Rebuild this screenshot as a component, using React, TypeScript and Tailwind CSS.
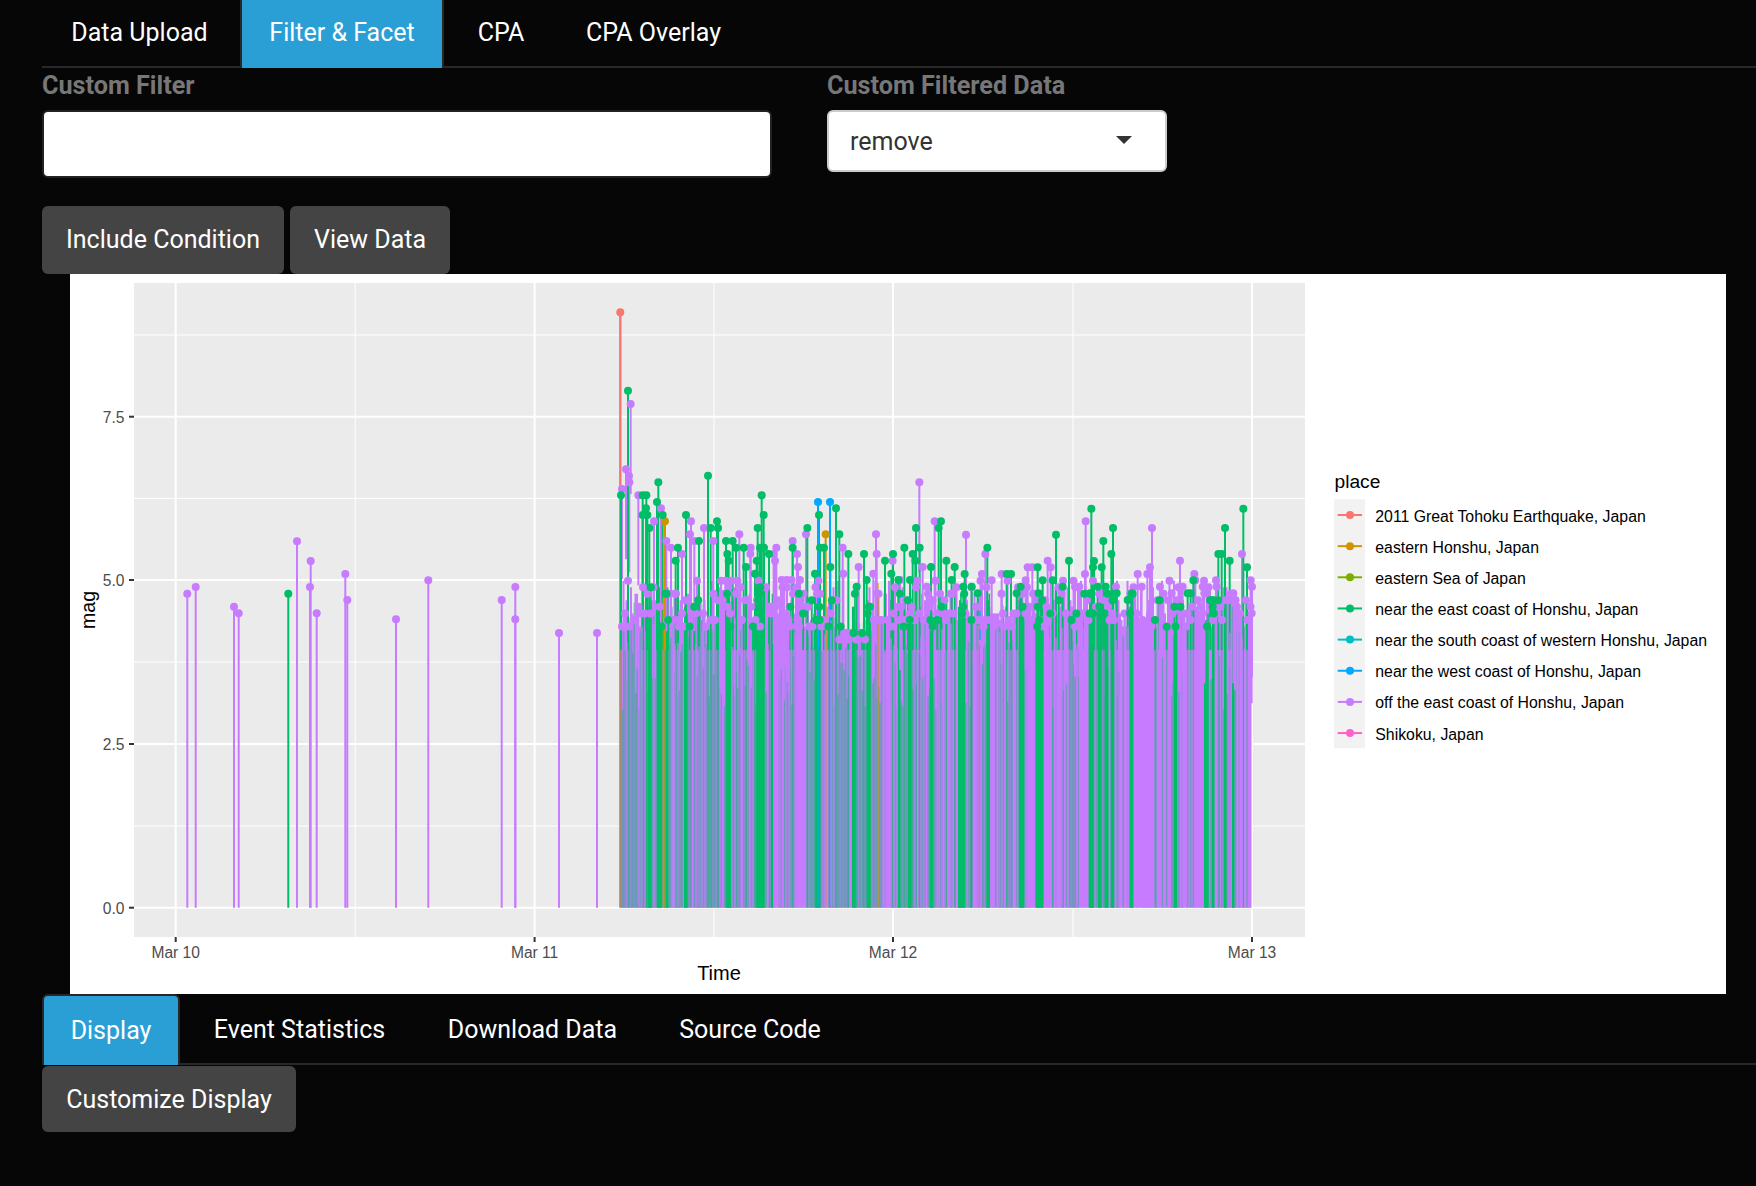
import React, { useMemo } from "react";

const C: Record<string, string> = {
  r: "#F8766D", o: "#CD9600", l: "#7CAE00", g: "#00BE67", c: "#00BFC4", b: "#00A9FF", p: "#C77CFF", k: "#FF61CC",
};
const BASE = 907.7;
const SPLIT = 650;

function rng(seed: number) {
  return () => {
    seed |= 0;
    seed = (seed + 0x6d2b79f5) | 0;
    let t = Math.imul(seed ^ (seed >>> 15), 1 | seed);
    t = (t + Math.imul(t ^ (t >>> 7), 61 | t)) ^ t;
    return ((t ^ (t >>> 14)) >>> 0) / 4294967296;
  };
}

type P = [number, number, string];
const LEFT: P[] = [
  [187.3, 593.7, "p"], [195.7, 587, "p"], [234, 606.7, "p"], [238.7, 613.3, "p"], [288.3, 593.7, "g"], [297, 541.3, "p"],
  [310.7, 561, "p"], [310, 587, "p"], [316.7, 613.3, "p"], [345.3, 574, "p"], [347.3, 600, "p"], [396, 619.3, "p"],
  [428.3, 580.3, "p"], [501.7, 600, "p"], [515.3, 587, "p"], [515.3, 619.3, "p"], [559, 633, "p"], [597, 633, "p"],
];
const Z5: P[] = ([
  [212,342,"p"],[198,538,"p"],[207,558,"p"],[208,577,"p"],[186,597,"p"],[235,616,"p"],[303,655,"p"],[282,694,"p"],[319,753,"p"],[333,773,"p"],[366,792,"p"],
  [393,694,"p"],[390,733,"p"],[403,753,"p"],[432,714,"p"],[460,753,"p"],[538,733,"p"],[572,773,"p"],[571,792,"p"],[649,773,"p"],[645,812,"p"],[641,792,"p"],
  [738,733,"p"],[698,753,"p"],[711,792,"p"],[714,831,"p"],[848,773,"p"],[896,831,"p"],[948,733,"p"],[950,792,"p"],[998,812,"p"],[1078,577,"p"],[1124,694,"p"],
  [1088,831,"p"],[940,851,"p"],[665,870,"p"],[680,870,"p"],[695,870,"p"],[720,870,"p"],[1100,890,"p"],[850,851,"p"],[1020,870,"p"],
  [315,694,"o"],[797,733,"o"],
  [204,302,"g"],[183,616,"g"],[248,616,"g"],[259,616,"g"],[295,577,"g"],[291,636,"g"],[258,655,"g"],[248,675,"g"],[262,675,"g"],[308,675,"g"],[268,714,"g"],
  [354,773,"g"],[347,812,"g"],[378,675,"g"],[417,753,"g"],[444,557,"g"],[452,714,"g"],[471,694,"g"],[474,714,"g"],[498,753,"g"],[518,753,"g"],[528,773,"g"],
  [551,773,"g"],[605,616,"g"],[611,675,"g"],[593,714,"g"],[600,773,"g"],[612,773,"g"],[627,792,"g"],[777,675,"g"],[828,655,"g"],[742,714,"g"],[838,733,"g"],
  [698,773,"g"],[780,773,"g"],[792,773,"g"],[865,792,"g"],[811,831,"g"],[912,792,"g"],[975,812,"g"],[999,792,"g"],[994,851,"g"],[1033,773,"g"],[1068,714,"g"],
  [1079,773,"g"],[1058,792,"g"],[1066,812,"g"],[1136,714,"g"],[1143,694,"g"],[1113,831,"g"],[1159,812,"g"],[1184,831,"g"],[1175,870,"g"],[765,851,"g"],[890,890,"g"],
  [502,792,"g"],[506,812,"g"],[590,812,"g"],[585,851,"g"],[558,831,"g"],[1050,870,"g"],[1015,870,"g"],[920,870,"g"],
  [774,636,"b"],[810,636,"b"],
] as P[]).map(([x, y, c]) => [560 + x / 3, 290 + y / 3, c] as P);
const Z8: P[] = ([
  [18,254,"p"],[76,312,"p"],[66,372,"p"],[263,332,"p"],[272,352,"p"],[203,352,"p"],[217,352,"p"],[377,214,"p"],[375,372,"p"],[576,234,"p"],[570,352,"p"],[562,372,"p"],
  [533,372,"p"],[545,410,"p"],[600,410,"p"],[635,430,"p"],[660,332,"p"],[668,410,"p"],[703,372,"p"],[706,391,"p"],[728,410,"p"],[846,312,"p"],[872,391,"p"],[876,410,"p"],
  [875,490,"p"],[768,391,"p"],[770,410,"p"],[125,372,"p"],[197,391,"p"],[95,391,"p"],[345,410,"p"],[358,410,"p"],[820,430,"p"],[825,450,"p"],[733,430,"p"],[468,410,"p"],
  [82,293,"g"],[14,372,"g"],[288,254,"g"],[233,352,"g"],[327,332,"g"],[394,176,"g"],[402,333,"g"],[399,352,"g"],[430,273,"g"],[459,234,"g"],[454,312,"g"],[425,352,"g"],
  [700,391,"g"],[850,176,"g"],[795,234,"g"],[775,312,"g"],[785,312,"g"],[809,332,"g"],[861,352,"g"],[758,450,"g"],[140,372,"g"],[153,372,"g"],[182,410,"g"],[248,391,"g"],
  [278,391,"g"],[308,410,"g"],[35,410,"g"],[10,410,"g"],[413,410,"g"],[437,410,"g"],[470,430,"g"],[503,450,"g"],[515,430,"g"],[236,430,"g"],[390,430,"g"],[683,430,"g"],
  [692,430,"g"],[53,430,"g"],[170,430,"g"],[418,470,"g"],[432,490,"g"],[510,490,"g"],[620,530,"g"],[585,510,"g"],[233,470,"g"],
] as P[]).map(([x, y, c]) => [960 + x / 3, 450 + y / 3, c] as P);

const GREEN_1: [number, number][] = [[100,110],[128,142],[150,158],[208,218],[335,347],[425,447],[468,473],[602,615],[712,720],[757,766],[850,855],[880,890],[945,953]];
const GREEN_2: [number, number][] = [[70,90],[108,112],[155,165],[252,268],[302,324],[462,475],[490,500],[510,518],[528,538],[585,595],[717,725],[808,820],[832,838],[868,874],[892,897]];
const PURE: [number, number][] = [
  [615 + 473 / 3, 615 + 490 / 3], [615 + 540 / 3, 615 + 570 / 3], [615 + 620 / 3, 615 + 640 / 3], [615 + 800 / 3, 615 + 830 / 3],
  [935 + 275 / 3, 935 + 300 / 3], [935 + 325 / 3, 935 + 345 / 3], [935 + 430 / 3, 935 + 460 / 3], [935 + 612 / 3, 935 + 660 / 3], [935 + 740 / 3, 935 + 800 / 3],
];

const isStripe = (x: number) =>
  GREEN_1.some(([a, b]) => x >= 615 + a / 3 - 1 && x <= 615 + b / 3 + 1) || GREEN_2.some(([a, b]) => x >= 935 + a / 3 - 1 && x <= 935 + b / 3 + 1);

type E = { x: number; y: number; c: string; w: number; dot: boolean; end: number; op: number };

function useChart() {
  return useMemo(() => {
    const r = rng(20110311);
    const magY = (m: number) => BASE - Math.round(m * 10) / 10 * 65.4;
    const under: E[] = [];
    const over: E[] = [];
    const inGap = (x: number) => x > 838 && x < 866;
    for (let x = 622; x <= 1251.5; x += 1.5) {
      const m = inGap(x) ? 4.05 + r() * 0.2 : 4.3 + Math.pow(r(), 1.3) * 0.75;
      under.push({ x, y: magY(m), c: "p", w: 2, dot: r() < 0.6, end: BASE, op: 1 });
    }
    for (let x = 622; x <= 1250; x += 1.5) {
      if (PURE.some(([a, b]) => x >= a && x <= b)) continue;
      const density = x < 935 ? 0.85 : x < 1010 ? 0.6 : 0.4;
      if (r() > density) continue;
      under.push({ x: x + r() * 0.5, y: 600 + r() * 110, c: "g", w: 1.6, dot: false, end: BASE, op: 0.42 });
    }
    for (let x = 626; x <= 1248; x += 4.2) {
      if (r() > 0.24) continue;
      const m = inGap(x) ? 4.15 + r() * 0.25 : 4.3 + Math.pow(r(), 1.3) * 0.6;
      under.push({ x: x + r(), y: magY(m), c: "g", w: 1.8, dot: true, end: SPLIT, op: 1 });
    }
    const add = (o: number, [a, b]: [number, number]) => {
      for (let x = o + a / 3 + 0.4; x <= o + b / 3; x += 1.1) {
        under.push({ x, y: magY(4.3 + r() * 0.6), c: "g", w: 1.6, dot: r() < 0.3, end: BASE, op: 1 });
      }
    };
    GREEN_1.forEach((s) => add(615, s));
    GREEN_2.forEach((s) => add(935, s));
    for (let x = 624; x <= 1251; x += 3) {
      if (isStripe(x) || inGap(x) || r() > 0.6) continue;
      over.push({ x, y: 615 + r() * 40, c: "p", w: 2, dot: false, end: BASE, op: 0.6 });
    }
    return { under, over };
  }, []);
}

function Plot() {
  const { under, over } = useChart();
  const peaks = [...Z5, ...Z8];
  const order = ["p", "o", "g", "b"];
  const sorted = [...peaks].sort((a, b) => order.indexOf(a[2]) - order.indexOf(b[2]));
  const tick = "#333333";
  const txt = "#4D4D4D";
  const font = "'Liberation Sans', Arial, sans-serif";
  const legend: [string, string][] = [
    ["r", "2011 Great Tohoku Earthquake, Japan"], ["o", "eastern Honshu, Japan"], ["l", "eastern Sea of Japan"],
    ["g", "near the east coast of Honshu, Japan"], ["c", "near the south coast of western Honshu, Japan"], ["b", "near the west coast of Honshu, Japan"],
    ["p", "off the east coast of Honshu, Japan"], ["k", "Shikoku, Japan"],
  ];
  const xMaj = [175.7, 534.6, 893, 1252];
  const xMin = [355.2, 714, 1073];
  const yMaj: [number, string][] = [[416.7, "7.5"], [580, "5.0"], [744, "2.5"], [907.7, "0.0"]];
  const yMin = [335, 498.4, 662, 826];
  return (
    <svg viewBox="70 274 1656 720" width={1656} height={720} className="block" style={{ fontFamily: font }}>
      <rect x={70} y={274} width={1656} height={720} fill="#fff" />
      <rect x={134} y={283} width={1171} height={654} fill="#EBEBEB" />
      {yMin.map((y) => <line key={y} x1={134} x2={1305} y1={y} y2={y} stroke="#fff" strokeWidth={1} />)}
      {xMin.map((x) => <line key={x} x1={x} x2={x} y1={283} y2={937} stroke="#fff" strokeWidth={1} />)}
      {yMaj.map(([y]) => <line key={y} x1={134} x2={1305} y1={y} y2={y} stroke="#fff" strokeWidth={2} />)}
      {xMaj.map((x) => <line key={x} x1={x} x2={x} y1={283} y2={937} stroke="#fff" strokeWidth={2} />)}

      {LEFT.map(([x, y, c], i) => <line key={i} x1={x} x2={x} y1={y} y2={BASE} stroke={C[c]} strokeWidth={2} />)}
      {under.map((e, i) => <line key={i} x1={e.x} x2={e.x} y1={e.y} y2={e.end} stroke={C[e.c]} strokeWidth={e.w} opacity={e.op} />)}
      <line x1={620.3} x2={620.3} y1={312.3} y2={BASE} stroke={C.r} strokeWidth={2.4} />
      {sorted.map(([x, y, c], i) => (
        <g key={i}>
          <line x1={x} x2={x} y1={y} y2={c === "p" ? Math.min(BASE, y + 90) : Math.max(y, SPLIT)} stroke={C[c]} strokeWidth={2} />
          {c !== "p" && <line x1={x} x2={x} y1={Math.max(y, SPLIT)} y2={BASE} stroke={C[c]} strokeWidth={1.5} opacity={c === "g" ? 0.4 : 0.8} />}
        </g>
      ))}
      {over.map((e, i) => <line key={i} x1={e.x} x2={e.x} y1={e.y} y2={e.end} stroke={C[e.c]} strokeWidth={e.w} opacity={e.op} />)}
      <line x1={663} x2={663} y1={600} y2={BASE} stroke={C.o} strokeWidth={1} opacity={0.6} />
      <line x1={878} x2={878} y1={583} y2={BASE} stroke={C.o} strokeWidth={1.6} opacity={0.7} />
      <line x1={978} x2={978} y1={620} y2={BASE} stroke={C.k} strokeWidth={1} opacity={0.6} />
      <line x1={980} x2={980} y1={611} y2={640} stroke={C.b} strokeWidth={1.4} />

      {under.filter((e) => e.dot && e.c === "p").map((e, i) => <circle key={i} cx={e.x} cy={e.y} r={4} fill={C.p} />)}
      {under.filter((e) => e.dot && e.c === "g").map((e, i) => <circle key={i} cx={e.x} cy={e.y} r={4} fill={C.g} />)}
      {sorted.map(([x, y, c], i) => <circle key={i} cx={x} cy={y} r={4} fill={C[c]} />)}
      {LEFT.map(([x, y, c], i) => <circle key={i} cx={x} cy={y} r={4} fill={C[c]} />)}
      <circle cx={620.3} cy={312.3} r={4} fill={C.r} />

      {yMaj.map(([y, t]) => (
        <g key={t}>
          <line x1={129} x2={134} y1={y} y2={y} stroke={tick} strokeWidth={2} />
          <text x={124.5} y={y + 6} textAnchor="end" fontSize={15.6} fill={txt}>{t}</text>
        </g>
      ))}
      {["Mar 10", "Mar 11", "Mar 12", "Mar 13"].map((t, i) => (
        <g key={t}>
          <line x1={xMaj[i]} x2={xMaj[i]} y1={937} y2={942} stroke={tick} strokeWidth={2} />
          <text x={xMaj[i]} y={958} textAnchor="middle" fontSize={15.6} fill={txt}>{t}</text>
        </g>
      ))}
      <text x={719} y={980} textAnchor="middle" fontSize={20} fill="#000">Time</text>
      <text transform="translate(95 610) rotate(-90)" textAnchor="middle" fontSize={19.6} fill="#000">mag</text>

      <text x={1334.5} y={488} fontSize={19.2} fill="#000">place</text>
      <rect x={1334} y={499.3} width={31} height={249} fill="#F2F2F2" />
      {legend.map(([c, t], i) => {
        const y = 515 + i * 31.15;
        return (
          <g key={t}>
            <line x1={1337.7} x2={1362} y1={y} y2={y} stroke={C[c]} strokeWidth={2} />
            <circle cx={1350} cy={y} r={4} fill={C[c]} />
            <text x={1375.3} y={y + 6.5} fontSize={15.83} fill="#000">{t}</text>
          </g>
        );
      })}
    </svg>
  );
}

function Tab({ label, active, cls }: { label: string; active?: boolean; cls?: string }) {
  return (
    <div className={`flex items-center justify-center ${active ? "bg-[#2a9fd6] border-x-2 border-[#282828]" : ""} ${cls ?? ""}`}>
      {label}
    </div>
  );
}

export default function App() {
  return (
    <div className="min-h-[1186px] bg-[#060606] pl-[42px] text-white font-['Roboto',sans-serif] text-[25px] overflow-hidden">
      <nav className="flex h-[68px] border-b-2 border-[#282828]">
        <Tab label="Data Upload" cls="w-[195px] mr-[3px]" />
        <Tab label="Filter & Facet" active cls="w-[204px] -mb-[2px] pb-[3px]" />
        <Tab label="CPA" cls="w-[114px]" />
        <Tab label="CPA Overlay" cls="w-[191px]" />
      </nav>
      <div className="flex h-[138px]">
        <div className="w-[785px] shrink-0">
          <div className="h-[35px] mb-[8px] text-[25.2px] font-bold text-[#777] flex items-center">Custom Filter</div>
          <input className="block w-[730px] h-[68px] -mt-[1px] bg-white rounded-[6px] border-2 border-[#222] outline-none" />
        </div>
        <div className="w-[340px] shrink-0">
          <div className="h-[35px] mb-[7px] text-[25.2px] font-bold text-[#777] flex items-center">Custom Filtered Data</div>
          <div className="h-[62px] bg-white rounded-[6px] border-2 border-[#ccc] flex items-center justify-between pl-[21px] pr-[33px] text-[#333]">
            <span className="pt-[2px]">remove</span>
            <span className="w-0 h-0 border-x-[8px] border-x-transparent border-t-[8px] border-t-[#333] -mt-[2px]" />
          </div>
        </div>
      </div>
      <div className="flex gap-[6px]">
        <button className="w-[242px] h-[68px] bg-[#444] rounded-[6px]">Include Condition</button>
        <button className="w-[160px] h-[68px] bg-[#444] rounded-[6px]">View Data</button>
      </div>
      <div className="ml-[28px] w-[1656px]">
        <Plot />
      </div>
      <nav className="flex h-[71px] border-b-2 border-[#282828]">
        <Tab label="Display" active cls="w-[138px] rounded-t-[6px] border-t-2 -mb-[2px]" />
        <Tab label="Event Statistics" cls="w-[239px] pt-[2px]" />
        <Tab label="Download Data" cls="w-[227px] pt-[2px]" />
        <Tab label="Source Code" cls="w-[208px] pt-[2px]" />
      </nav>
      <button className="block mt-[1px] w-[254px] h-[66px] pt-[2px] bg-[#444] rounded-[6px]">Customize Display</button>
    </div>
  );
}
